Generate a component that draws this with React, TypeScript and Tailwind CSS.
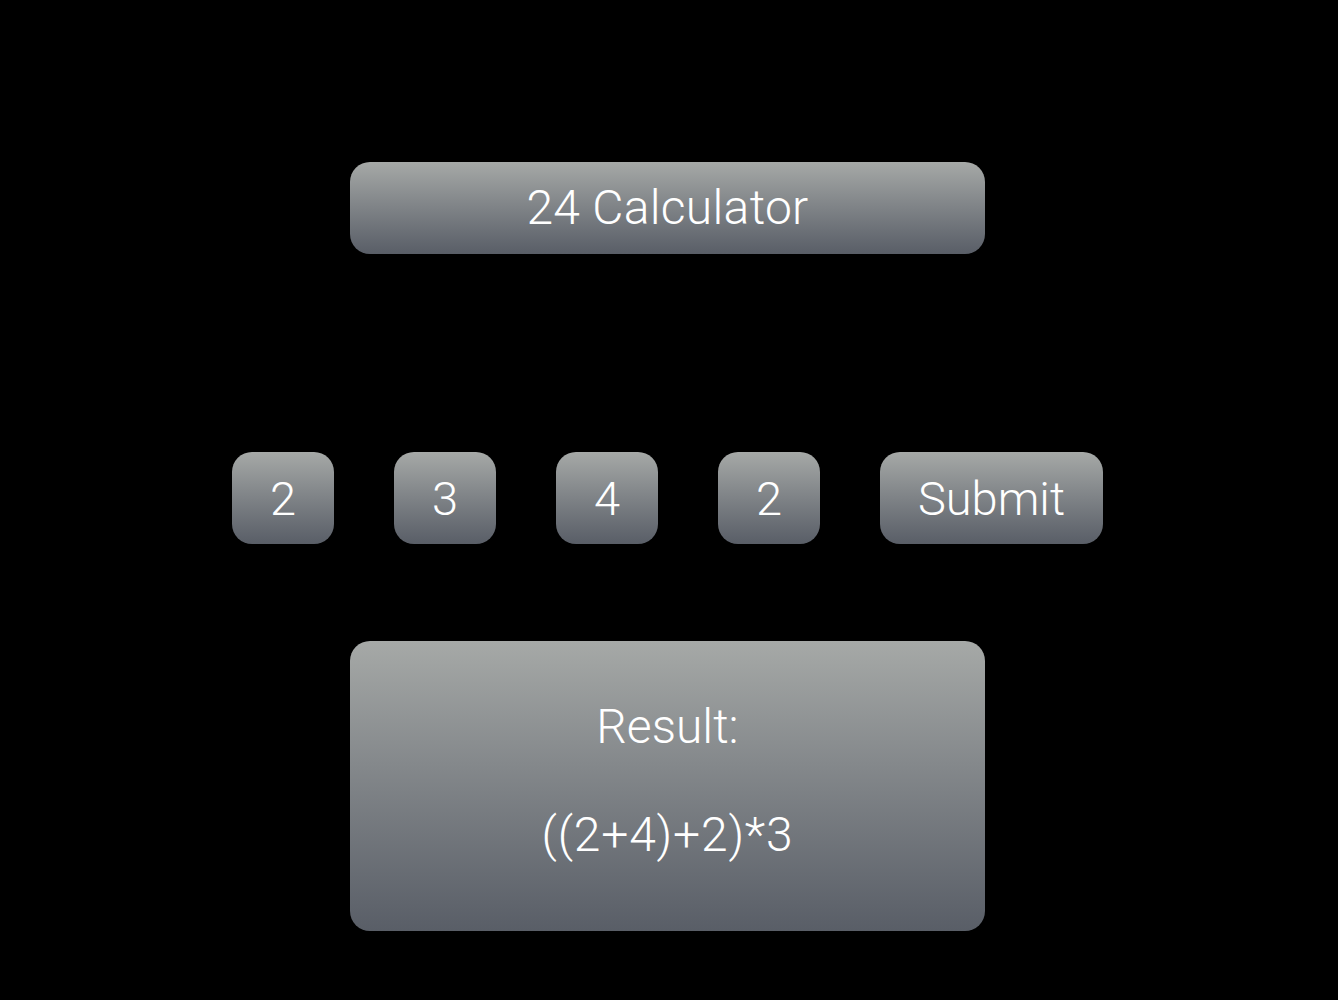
import React from "react";

const grad = "bg-gradient-to-b from-[#a6a9a7] to-[#595e67]";

export default function App() {
  const nums = ["2", "3", "4", "2"];
  return (
    <div
      className="min-h-[1000px] w-full bg-black text-white font-light"
      style={{ fontFamily: "Roboto, 'Open Sans', sans-serif" }}
    >
      <div className="flex flex-col items-center pt-[162px] pr-[3px]">
        <div className={`${grad} w-[635px] h-[92px] rounded-[20px] flex items-center justify-center text-[48px] leading-none tracking-[0.3px]`}>
          24 Calculator
        </div>
        <div className="mt-[198px] flex gap-[60px]">
          {nums.map((n, i) => (
            <div
              key={i}
              className={`${grad} w-[102px] h-[92px] rounded-[20px] flex items-center justify-center text-[47px] leading-none`}
            >
              {n}
            </div>
          ))}
          <div className={`${grad} w-[223px] h-[92px] rounded-[20px] flex items-center justify-center text-[47px] leading-none`}>
            Submit
          </div>
        </div>
        <div className={`${grad} mt-[97px] w-[635px] h-[290px] rounded-[20px] flex flex-col items-center pt-[62px] text-[48px] leading-none`}>
          <div className="h-[48px] flex items-center">Result:</div>
          <div className="mt-[60px] h-[48px] flex items-center tracking-[0.8px]">((2+4)+2)*3</div>
        </div>
      </div>
    </div>
  );
}
